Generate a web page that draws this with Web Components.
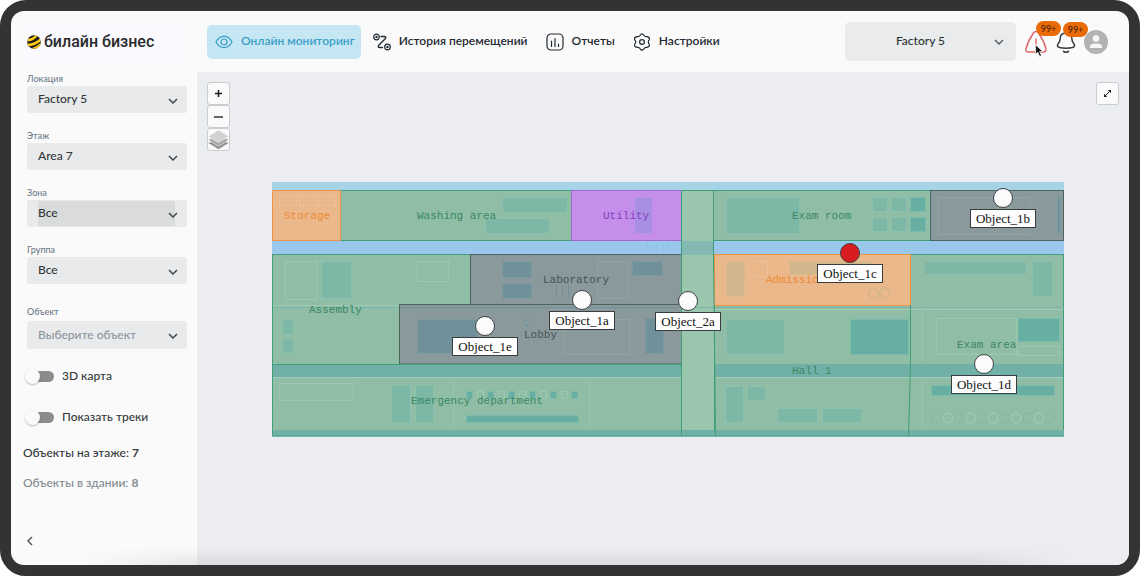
<!DOCTYPE html>
<html lang="ru">
<head>
<meta charset="utf-8">
<title>Онлайн мониторинг</title>
<style>
body { margin: 0; background: #fff; color: #34383c; font: 500 12px/16px Lato, "Open Sans", sans-serif; }
</style>
</head>
<body>
<monitor-app></monitor-app>
<script>
const define = (name, render) => customElements.define(name, class extends HTMLElement {
  connectedCallback() {
    if (this.shadowRoot) return;
    this.attachShadow({ mode: 'open' }).innerHTML = '<style>*{box-sizing:border-box}svg{display:block;flex:none}</style>' + render(this);
  }
});

const icons = {
  eye: '<path d="M1 9C5 1.5 13 1.5 17 9C13 16.500 5 16.500 1 9Z"/><circle cx="9" cy="9" r="3"/>',
  route: '<circle cx="3.500" cy="4" r="2.800"/><circle cx="3.500" cy="4" r=".6"/><circle cx="14.500" cy="14" r="2.800"/><circle cx="14.500" cy="14" r=".6"/><path d="M8 3.500h3.500q2.500.5.500 2.500L6 12q-2 2.500 1 2.500h2.500" stroke-width="1.400"/>',
  report: '<rect x="1" y="1" width="16" height="16" rx="4"/><path d="M5.500 8v5.500M9 5.500v8M12.500 11v2.500"/>',
  gear: '<path d="M7.200 2.200Q9-.4 10.800 2.200q.8 1.500 2.500 1.500 3.200 0 3.200 2.200 0 1-.9 1.700-.6 1.400 0 2.800.9.700.9 1.700 0 2.200-3.200 2.200-1.700 0-2.500 1.500Q9 18.400 7.200 15.800q-.8-1.500-2.500-1.500-3.200 0-3.200-2.200 0-1 .9-1.700.6-1.400 0-2.800-.9-.7-.9-1.700 0-2.200 3.200-2.200 1.700 0 2.500-1.500Z"/><circle cx="9" cy="9" r="2.400"/>'
};

define('nav-link', el => `
<style>
:host { display: block; }
a { display: flex; align-items: center; gap: 8px; height: 34px; padding: 0 6px 0 8px; border-radius: 5px; color: #1f2a33; font-size: 12px; font-weight: 600; text-decoration: none; white-space: nowrap; }
span { padding-bottom: 2px; }
:host([active]) a { background: #c5e6f3; color: #3a9fc6; }
</style>
<a href="#"><svg width="18" height="18" viewBox="0 0 18 18" fill="none" stroke="currentColor" stroke-width="1.200" stroke-linecap="round">${icons[el.getAttribute('icon')]}</svg><span><slot></slot></span></a>`);

define('field-select', el => `
<style>
:host { display: block; margin-bottom: 16px; }
label { display: block; height: 14px; color: #6d7b89; font-size: 9px; line-height: 14px; }
.box { position: relative; }
select { display: block; appearance: none; width: 100%; height: 27px; padding: 0 28px 2px 11px; border: 0; border-radius: 3px; background: #e8eaeb; color: #33373b; font: inherit; font-size: 12px; }
:host([focused]) select { background: linear-gradient(#dadcdc, #dadcdc) 11px 1px / calc(100% - 23px) 25px no-repeat, #e8eaeb; }
:host([empty]) label { height: 16px; }
:host([empty]) select { height: 28px; padding-bottom: 0; color: #8d959c; }
svg { position: absolute; right: 9px; top: 12px; pointer-events: none; }
</style>
<label for="s">${el.getAttribute('label')}</label>
<div class="box"><select id="s"><option>${el.getAttribute('value')}</option></select>
<svg width="10" height="6" viewBox="0 0 10 6" fill="none" stroke="#43484c" stroke-width="1.500"><path d="M1 1l4 4 4-4"/></svg></div>`);

define('toggle-switch', el => `
<style>
:host { display: block; }
label { display: flex; align-items: center; gap: 8px; height: 16px; font-size: 12px; }
input { appearance: none; position: relative; flex: none; width: 28px; height: 11px; margin: 0; border-radius: 6px; background: #8b8c8c; }
input::before { content: ""; position: absolute; left: -1px; top: -2px; width: 15px; height: 15px; border-radius: 50%; background: #fafafa; box-shadow: 0 1px 2px #0004; }
input:checked::before { left: 14px; }
</style>
<label><input type="checkbox"><slot></slot></label>`);

define('app-sidebar', () => `
<style>
:host { display: flex; flex-direction: column; width: 186px; flex: none; padding: 10px 10px 19px 16px; }
.logo { display: flex; align-items: center; gap: 3px; height: 42px; margin-bottom: 9px; background: #f9f9fe; color: #2a2a2c; font: 500 16px/20px Roboto, sans-serif; }
.object { margin: 5px 0 0; }
.toggles { display: grid; gap: 25px; margin: 19px 0 0 -1px; }
.stats { display: grid; gap: 14px; margin: 20px 0 0 -4px; }
.stats p { margin: 0; white-space: nowrap; }
.stats .all { color: #838a91; }
b { font-weight: 700; }
button { margin: auto 0 0 -1px; align-self: start; padding: 0; border: 0; background: none; display: block; }
</style>
<div class="logo"><svg width="14" height="14" viewBox="0 0 14 14"><defs><clipPath id="c"><circle cx="7" cy="7" r="6.800"/></clipPath></defs><g clip-path="url(#c)"><path fill="#1c1b1a" d="M0 0h14v14H0z"/><path fill="none" stroke="#fbc916" stroke-width="2.600" d="M0 5.200Q7 5 10-.5M-1 10Q9 10 14.500 3.500M5 14.500Q10 13 14.500 9"/></g></svg><span>билайн бизнес</span></div>
<div class="fields">
<field-select label="Локация" value="Factory 5"></field-select>
<field-select label="Этаж" value="Area 7"></field-select>
<field-select label="Зона" value="Все" focused></field-select>
<field-select label="Группа" value="Все"></field-select>
</div>
<field-select class="object" label="Объект" value="Выберите объект" empty></field-select>
<div class="toggles"><toggle-switch>3D карта</toggle-switch><toggle-switch>Показать треки</toggle-switch></div>
<div class="stats"><p>Объекты на этаже: <b>7</b></p><p class="all">Объекты в здании: <b>8</b></p></div>
<button aria-label="Свернуть"><svg width="7" height="10" viewBox="0 0 7 10" fill="none" stroke="#55595c" stroke-width="1.500"><path d="M6 1 2 5l4 4"/></svg></button>`);

define('count-badge', () => `
<style>
:host { position: absolute; z-index: 1; left: 12px; top: -10px; min-width: 25px; height: 15px; border-radius: 8px; background: #ea6a05; color: #4a2410; font-size: 9px; line-height: 15px; text-align: center; }
</style><slot></slot>`);

define('app-header', () => `
<style>
:host { display: flex; align-items: center; justify-content: space-between; height: 61px; padding: 0 21px 0 10px; }
nav { display: flex; gap: 4px; }
.tools { display: flex; align-items: center; }
.place { position: relative; width: 171px; margin-right: 8px; }
select { appearance: none; display: block; width: 100%; height: 39px; padding: 0 20px 2px 0; border: 0; border-radius: 5px; background: #e9ebec; color: #2a3238; font: inherit; text-align: center; text-align-last: center; }
.place > svg { position: absolute; right: 12px; top: 17px; pointer-events: none; }
button { position: relative; display: block; padding: 0; border: 0; background: none; color: inherit; font: inherit; }
.bell { margin: 2px 8px 0 8px; }
.bell count-badge { left: 7px; }
.cursor { position: absolute; left: 11px; top: 13px; z-index: 2; }
</style>
<nav>
<nav-link icon="eye" active>Онлайн мониторинг</nav-link>
<nav-link icon="route">История перемещений</nav-link>
<nav-link icon="report">Отчеты</nav-link>
<nav-link icon="gear">Настройки</nav-link>
</nav>
<div class="tools">
<div class="place"><select aria-label="Объект"><option>Factory 5</option></select><svg width="10" height="6" viewBox="0 0 10 6" fill="none" stroke="#555a5e" stroke-width="1.400"><path d="M1 1l4 4 4-4"/></svg></div>
<button aria-label="Тревоги"><svg width="24" height="22" viewBox="0 0 24 22" fill="none" stroke="#e2636b" stroke-width="1.400" stroke-linecap="round"><path d="M9.500 2q2.500-3 5 0Q20 10 22 17.500q.5 3-2 3.500H4q-2.800-.5-2-3.500Q4 10 9.500 2ZM12 8v5M12 15.500v1"/></svg><count-badge>99+</count-badge>
<svg class="cursor" width="9" height="13" viewBox="0 0 9 13"><path d="M.6.800v9.400l2.200-2 1.900 4.200 1.800-.8-1.900-4h3.200Z" fill="#111" stroke="#fff" stroke-width=".7"/></svg></button>
<button class="bell" aria-label="Уведомления"><svg width="20" height="22" viewBox="0 0 20 22" fill="none" stroke="#33383c" stroke-width="1.500" stroke-linecap="round"><path d="M10 1C5.500 1 4 4 4 7.500c0 3-3 4.500-2.500 6.500.5 2 4 2.200 8.500 2.200s8-.2 8.500-2.200c.5-2-2.500-3.500-2.500-6.500C16 4 14.500 1 10 1ZM7.500 19.300q2.500 2 5 0"/></svg><count-badge>99+</count-badge></button>
<button aria-label="Профиль"><svg width="24" height="24" viewBox="0 0 24 24"><circle cx="12" cy="12" r="12" fill="#b2b2b2"/><circle cx="12" cy="8.500" r="3.300" fill="#f6f6f6"/><path d="M6 18v-1.500q0-3 6-3t6 3V18Z" fill="#f6f6f6"/></svg></button>
</div>`);

define('map-pin', el => `
<style>
:host { position: absolute; left: calc((var(--x) - 272) / 792 * 100%); top: calc((var(--y) - 182) / 255 * 100%); }
.pin { display: flex; flex-direction: column; align-items: center; gap: 1px; width: 66px; margin: -10px 0 0 -33px; }
i { width: 20px; height: 20px; border: 1px solid #3c4144; border-radius: 50%; background: #fbfbfb; }
:host([alarm]) i { background: #d81c20; }
span { width: 66px; height: 19px; border: 1px solid #3a3d40; background: #fdfdfd; color: #111; font: 400 13px/17px "Liberation Serif", serif; text-align: center; }
</style>
<div class="pin"><i></i><span><slot></slot></span></div>`);

const rects = (cls, list) => `<g class="${cls}">` + list.map(([x, y, w, h]) => `<rect x="${x}" y="${y}" width="${w}" height="${h}"/>`).join('') + '</g>';
const circles = (y, r, xs) => xs.map(x => `<circle cx="${x}" cy="${y}" r="${r}"/>`).join('');

define('floor-plan', () => `
<style>
:host { display: block; position: relative; }
.plan { width: 100%; height: auto; }
.green rect { fill: #90bda5; stroke: #3f9f76; }
.lane rect { fill: #9bc6ae; }
.grey rect { fill: #8a999b; stroke: #4b6460; }
.strip rect { fill: #71b0a7; }
.room rect { fill: #7db8a7; stroke: #8dc1ac; }
.deep rect { fill: #67aea3; stroke: #7cbaab; }
.dark rect { fill: #71919a; stroke: #7d9aa1; }
.line rect { fill: none; stroke: #9bc8b0; }
.pale rect { fill: none; stroke: #92a3a3; }
text { font: 11px "Liberation Mono", monospace; fill: #3a8864; }
</style>
<svg class="plan" viewBox="272 182 792 255" role="img" aria-label="План этажа">
<path fill="#a7d3e6" d="M272 182h792v255H272z"/>
<path fill="#9ac8ed" d="M272 241h792v14H272z"/>
<text x="646" y="251" style="fill:#8fc0e6">Hall 2</text>
${rects('green', [[340.5, 190.5, 231, 50], [713.5, 190.5, 217, 50], [272.5, 254.5, 409, 181], [714.5, 254.5, 349, 181]])}
${rects('lane', [[682, 190.5, 32, 245]])}
<path fill="#84b9b3" d="M682 241h32v14h-32z"/>
${rects('strip', [[273, 364, 408, 13], [273, 430, 791, 6], [715, 364, 348, 13]])}
<path stroke="#a3ccb3" d="M273 305.500h408M273 377.500h408M715 309.500h348M715 377.500h348"/>
<path stroke="#99c4ab" d="M453.500 378v52M589.500 378v52M922.500 309v52M922.500 378v52"/>
<path stroke="#7ab6ac" d="M273 307.500h791"/>
<path fill="#eab88a" stroke="#e9944a" d="M272.500 190.500h68v50h-68z"/>
<path fill="#c48eea" stroke="#a268cf" d="M571.500 190.500h110v50h-110z"/>
${rects('grey', [[930.5, 190.5, 133, 50], [470.5, 254.5, 211, 50], [399.5, 304.500, 282, 59.5]])}
<path fill="#eab88a" stroke="#ec9440" d="M714.500 254.500h196v51h-196z"/>
<path stroke="#3f9f76" fill="none" d="M272.500 364.500h409M910.500 305v60l-2 71M681.500 190v246M713.500 190v64l2 182M682 190.500h32M272.500 436h792"/>
<path stroke="#71929a" fill="none" d="M400 307.500h281M556.500 284v14M562.500 284v14M568.500 284v14"/>
${rects('room', [[502.5, 197.5, 65, 15], [485.5, 218.5, 64, 15], [726.5, 197.5, 73, 36], [872.5, 197.5, 15, 14], [891.5, 197.5, 15, 14], [872.5, 217.5, 15, 14], [891.5, 217.5, 15, 14], [321.5, 261.5, 30, 37], [282.5, 319.5, 11, 15], [282.5, 338.5, 11, 15], [391.5, 385.5, 19, 37], [415.5, 385.5, 18, 37], [726.5, 319.5, 58, 35], [725.5, 386.5, 18, 36], [747.5, 386.5, 18, 14], [777.5, 408.5, 40, 14], [822.5, 408.5, 39, 14], [924.5, 261.5, 102, 13], [1032.5, 261.5, 20, 35]])}
${rects('deep', [[910.5, 197.5, 15, 14], [910.5, 217.5, 15, 14], [850.5, 319.5, 58, 35], [1018.5, 318.5, 41, 23], [931.5, 385.5, 123, 10], [466.5, 415.5, 112, 7], [466.5, 391.500, 6, 7], [487.5, 391.500, 6, 7], [508.5, 391.500, 6, 7], [529.5, 391.500, 6, 7], [550.5, 391.500, 6, 7], [571.5, 391.500, 6, 7]])}
${rects('dark', [[502.5, 261.5, 29, 16], [502.5, 283.5, 29, 15], [632.5, 261.5, 30, 14], [417.5, 319.5, 60, 34], [645.5, 318.5, 18, 35], [1057.5, 197.5, 3, 36]])}
${rects('line', [[285.500, 261.500, 31, 38], [417.500, 261.500, 31, 20], [279.500, 383.500, 74, 17], [936.500, 318.500, 80, 36], [1018.500, 346.500, 41, 9], [477.500, 391.500, 6, 7], [498.500, 391.500, 6, 7], [519.500, 391.500, 6, 7], [540.500, 391.500, 6, 7], [561.500, 391.500, 6, 7]])}
${rects('pale', [[597.500, 261.500, 30, 37], [563.500, 319.500, 66, 35], [938.500, 197.500, 92, 37]])}
<g fill="#a98fe3" stroke="#bb94ea"><path d="M634.500 197.500h18v36h-18z"/><path fill="none" d="M588.500 196.500h43v38h-43zM579.500 191v49"/></g>
<g fill="none" stroke="#efc59c"><path d="M279.500 195.500h17v10h-17zM299.500 195.500h17v10h-17zM318.500 195.500h17v10h-17zM748.500 261.500h19v15h-19z" stroke-dasharray="2 1"/></g>
<path fill="#d1b68c" stroke="#deba8f" d="M726.500 261.500h18v35h-18zM789.500 261.500h84v13h-84z"/>
<g fill="none" stroke="#c5b38b">${circles(293, 5, [873.5, 885])}</g>
<g fill="none" stroke="#85b8a2">${circles(418, 5, [937, 959, 982, 1005, 1028, 1050])}</g>
<g fill="none" stroke="#a5ceb7">${circles(418, 5, [948, 971, 993, 1016, 1039])}</g>
<g fill="#6c98a3">${circles(320, 1.5, [525, 531])}${circles(325, 1.5, [527])}</g>
<text x="284" y="219" style="fill:#ee8a35">Storage</text>
<text x="417" y="219">Washing area</text>
<text x="603" y="219" style="fill:#8640bd">Utility</text>
<text x="792" y="219">Exam room</text>
<text x="543" y="283" style="fill:#435558">Laboratory</text>
<text x="766" y="283" style="fill:#ee8a35">Admission</text>
<text x="309" y="313">Assembly</text>
<text x="524" y="338" style="fill:#435558">Lobby</text>
<text x="957" y="348">Exam area</text>
<text x="792" y="374">Hall 1</text>
<text x="411" y="404">Emergency department</text>
</svg>
<map-pin style="--x:582;--y:300">Object_1a</map-pin>
<map-pin style="--x:1003;--y:198">Object_1b</map-pin>
<map-pin style="--x:850;--y:253" alarm>Object_1c</map-pin>
<map-pin style="--x:984;--y:364">Object_1d</map-pin>
<map-pin style="--x:485;--y:326">Object_1e</map-pin>
<map-pin style="--x:688;--y:301">Object_2a</map-pin>`);

define('map-stage', () => `
<style>
:host { display: block; position: relative; flex: 1; padding: 110px 65px 40px 75px; background: #ebedf1; }
.zoom { position: absolute; left: 10px; top: 10px; display: grid; }
.full { position: absolute; right: 10px; top: 10px; }
button { display: grid; place-items: center; width: 23px; height: 23px; padding: 0; border: 1px solid #c9ccd0; border-radius: 3px; background: #fafafa; }
</style>
<floor-plan></floor-plan>
<div class="zoom">
<button aria-label="Увеличить"><svg width="9" height="9" viewBox="0 0 9 9" stroke="#161616" stroke-width="1.500"><path d="M4.500 1v7M1 4.500h7"/></svg></button>
<button aria-label="Уменьшить"><svg width="9" height="9" viewBox="0 0 9 9" stroke="#333" stroke-width="1.300"><path d="M0 5h9"/></svg></button>
<button aria-label="Слои"><svg width="21" height="20" viewBox="0 0 21 20"><g stroke="#fafafa" stroke-width=".6"><path d="M0 13 10.500 8 21 13 10.500 19.500Z" fill="#8f8f8f"/><path d="M0 9.800 10.500 5 21 9.800 10.500 16.200Z" fill="#a6a6a6"/><path d="M0 6.500 10.500 0 21 6.500 10.500 12.500Z" fill="#d2d2d2"/></g></svg></button>
</div>
<button class="full" aria-label="На весь экран"><svg width="9" height="9" viewBox="0 0 9 9"><path d="M2 7 7 2" stroke="#222"/><path d="M4.800 1H8v3.200ZM1 4.800V8h3.200Z" fill="#222"/></svg></button>`);

define('monitor-app', () => `
<style>
:host { display: flex; position: relative; min-height: 100vh; box-sizing: border-box; border: 11px solid #333; border-radius: 26px; background: #333; }
.screen { display: flex; flex: 1; border-radius: 13px; background: #fafafa; overflow: hidden; position: relative; }
.screen::after { content: ""; position: absolute; left: 70px; right: 60px; bottom: 0; height: 18px; background: linear-gradient(#0000, #00000012); mask: linear-gradient(90deg, #0000, #000 10%, #000 90%, #0000); pointer-events: none; }
main { display: flex; flex-direction: column; flex: 1; min-width: 0; }
</style>
<div class="screen"><app-sidebar></app-sidebar><main><app-header></app-header><map-stage></map-stage></main></div>`);
</script>
</body>
</html>
